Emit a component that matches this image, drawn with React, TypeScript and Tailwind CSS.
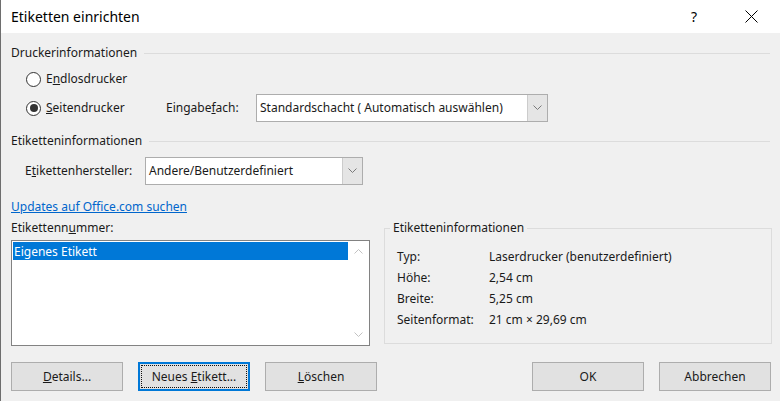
import React from "react";

const font = { fontFamily: '"Noto Sans", "Open Sans", Arial, sans-serif' };

const Chevron = ({ up = false, className = "" }: { up?: boolean; className?: string }) => (
  <svg width="9" height="6" viewBox="0 0 9 6" className={className}>
    <path
      d={up ? "M0.5 5.5 L4.5 1.5 L8.5 5.5" : "M0.5 0.5 L4.5 4.5 L8.5 0.5"}
      fill="none"
      stroke="currentColor"
      strokeWidth="1"
    />
  </svg>
);

const Radio = ({ checked, children }: { checked?: boolean; children: React.ReactNode }) => (
  <div className="flex items-center h-[22px]">
    <div className="ml-[15px] w-[15px] h-[15px] rounded-full border border-[#333] bg-white flex items-center justify-center">
      {checked && <div className="w-[8px] h-[8px] rounded-full bg-[#333]" />}
    </div>
    <span className="ml-[5px]">{children}</span>
  </div>
);

const SectionHeader = ({ title, className = "" }: { title: string; className?: string }) => (
  <div className={`flex items-center h-[18px] pr-[10px] ${className}`}>
    <span>{title}</span>
    <div className="flex-1 h-px bg-[#dcdcdc] ml-[7px]" />
  </div>
);

const Select = ({ value, className = "" }: { value: string; className?: string }) => (
  <div className={`h-[28px] flex bg-white border border-[#adadad] ${className}`}>
    <div className="flex-1 flex items-center pl-[3px] whitespace-nowrap">{value}</div>
    <div className="w-[20px] bg-[#e5e5e5] border-l border-[#cccccc] flex items-center justify-center text-[#7a7a7a]">
      <Chevron />
    </div>
  </div>
);

const Button = ({ children, focused = false, className = "" }: { children: React.ReactNode; focused?: boolean; className?: string }) => (
  <div
    className={`h-[29px] w-[112px] flex items-center justify-center bg-[#e1e1e1] ${
      focused ? "border-2 border-[#0078d7] p-[1px]" : "border border-[#adadad]"
    } ${className}`}
  >
    {focused ? (
      <div className="w-full h-full border border-dotted border-[#111] flex items-center justify-center">{children}</div>
    ) : (
      children
    )}
  </div>
);

export default function App() {
  return (
    <div style={font} className="w-[780px] h-[401px] bg-[#f0f0f0] border-l border-[#6e6e6e] text-[12px] text-[#1a1a1a] flex flex-col overflow-hidden">
      {/* Title bar */}
      <div className="h-[33px] bg-white flex items-center pl-[10px] shrink-0">
        <span className="text-[14px] text-black">Etiketten einrichten</span>
        <span className="ml-auto text-[14px] text-black mr-[48px]">?</span>
        <svg width="13" height="13" viewBox="0 0 13 13" className="mr-[22px] text-black">
          <path d="M0.5 0.5 L12.5 12.5 M12.5 0.5 L0.5 12.5" stroke="currentColor" strokeWidth="1" />
        </svg>
      </div>

      <div className="flex flex-col pl-[10px]">
        <SectionHeader title="Druckerinformationen" className="mt-[11px]" />
        <div className="mt-[6px]">
          <Radio>
            E<u>n</u>dlosdrucker
          </Radio>
        </div>
        <div className="flex items-center h-[28px] mt-[4px]">
          <div className="w-[155px]">
            <Radio checked>
              <u>S</u>eitendrucker
            </Radio>
          </div>
          <span className="w-[90px]">
            Eingabe<u>f</u>ach:
          </span>
          <Select value="Standardschacht ( Automatisch auswählen)" className="w-[292px]" />
        </div>

        <SectionHeader title="Etiketteninformationen" className="mt-[10px]" />
        <div className="flex items-center h-[28px] mt-[7px]">
          <span className="ml-[14px] w-[120px]">
            E<u>t</u>ikettenhersteller:
          </span>
          <Select value="Andere/Benutzerdefiniert" className="w-[218px]" />
        </div>

        <div className="h-[18px] mt-[13px] flex items-center">
          <span className="text-[#0066cc] underline">Updates auf Office.com suchen</span>
        </div>

        <div className="flex mt-[3px]">
          {/* Left column */}
          <div className="w-[359px] flex flex-col">
            <div className="h-[18px] flex items-center">
              Etikettenn<u>u</u>mmer:
            </div>
            <div className="mt-[3px] h-[106px] bg-white border border-[#828282] flex p-[1px]">
              <div className="flex-1">
                <div className="h-[18px] bg-[#0078d7] text-white flex items-center pl-[1px] pt-[1px]">Eigenes Etikett</div>
              </div>
              <div className="w-[20px] flex flex-col items-center justify-between py-[6px] text-[#c2c2c2]">
                <Chevron up />
                <Chevron />
              </div>
            </div>
          </div>

          {/* Right group box */}
          <div className="ml-[14px] w-[388px] mt-[9px] h-[116px] border border-[#dcdcdc] relative">
            <span className="absolute -top-[10px] left-[5px] bg-[#f0f0f0] px-[3px]">Etiketteninformationen</span>
            <div className="mt-[17px] ml-[12px] flex flex-col">
              {[
                ["Typ:", "Laserdrucker (benutzerdefiniert)"],
                ["Höhe:", "2,54 cm"],
                ["Breite:", "5,25 cm"],
                ["Seitenformat:", "21 cm × 29,69 cm"],
              ].map(([k, v]) => (
                <div key={k} className="h-[21px] flex items-center">
                  <span className="w-[92px]">{k}</span>
                  <span>{v}</span>
                </div>
              ))}
            </div>
          </div>
        </div>

        {/* Buttons */}
        <div className="flex mt-[16px]">
          <Button>
            <span>
              <u>D</u>etails...
            </span>
          </Button>
          <Button focused className="ml-[15px]">
            <span>
              Neues <u>E</u>tikett...
            </span>
          </Button>
          <Button className="ml-[15px]">
            <span>
              <u>L</u>öschen
            </span>
          </Button>
          <Button className="ml-auto">OK</Button>
          <Button className="ml-[15px] mr-[9px]">Abbrechen</Button>
        </div>
      </div>
    </div>
  );
}
